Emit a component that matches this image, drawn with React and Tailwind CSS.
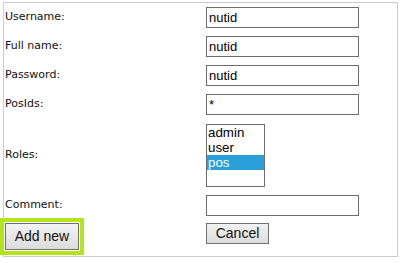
export default function App() {
  const label = "w-[202px] pl-[1px] text-[11px] text-[#111] font-['DejaVu_Sans',sans-serif] flex items-center";
  const input =
    "box-border w-[153px] h-[21px] border border-[#6e6e6e] bg-white px-[2px] text-[13px] leading-[19px] text-black font-['Liberation_Sans',Arial,sans-serif] flex items-center";
  const btn =
    "box-border border border-[#707070] bg-gradient-to-b from-[#f3f3f3] to-[#dcdcdc] text-[14px] text-[#111] font-['Liberation_Sans',Arial,sans-serif] flex items-center justify-center";
  return (
    <div className="w-[401px] h-[263px] bg-white">
      <div className="ml-[3px] mt-[2px] w-[395px] h-[255px] border border-[#cccccc] bg-white box-border flex flex-col">
        <div className="flex h-[21px] mt-[4px]">
          <div className={label}>Username:</div>
          <div className={input}>nutid</div>
        </div>
        <div className="flex h-[21px] mt-[8px]">
          <div className={label}>Full name:</div>
          <div className={input}>nutid</div>
        </div>
        <div className="flex h-[21px] mt-[8px]">
          <div className={label}>Password:</div>
          <div className={input}>nutid</div>
        </div>
        <div className="flex h-[21px] mt-[8px]">
          <div className={label}>PosIds:</div>
          <div className={input}>*</div>
        </div>
        <div className="flex h-[63px] mt-[9px]">
          <div className={label}>Roles:</div>
          <div className="box-border w-[59px] h-[63px] border border-[#6e6e6e] bg-white text-[13.33px] leading-[15px] text-black font-['Liberation_Sans',Arial,sans-serif] flex flex-col">
            <div className="px-[1px] h-[15px]">admin</div>
            <div className="px-[1px] h-[15px]">user</div>
            <div className="px-[1px] h-[15px] bg-[#2aa0da] text-white">pos</div>
          </div>
        </div>
        <div className="flex h-[21px] mt-[8px]">
          <div className={label}>Comment:</div>
          <div className={input}></div>
        </div>
        <div className="flex mt-[2px]">
          <div className="w-[202px] -ml-[4px] mr-[4px]">
            <div className="w-[84px] h-[37px] bg-[#b4e41c] p-[4px] box-border">
              <div className="w-full h-full border border-white box-border">
                <div className={btn + " w-full h-full"}>Add new</div>
              </div>
            </div>
          </div>
          <div className="pt-[5px]">
            <div className={btn + " w-[63px] h-[21px]"}>Cancel</div>
          </div>
        </div>
      </div>
    </div>
  );
}
